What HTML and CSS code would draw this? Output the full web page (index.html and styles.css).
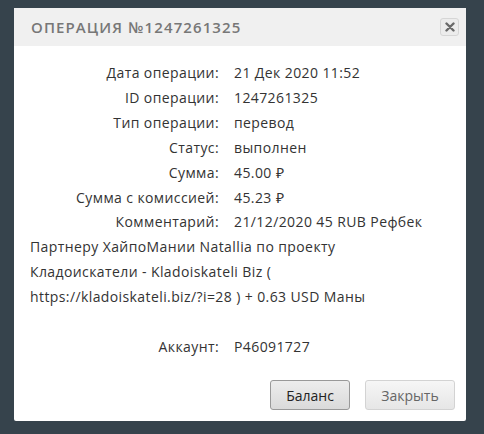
FILE: index.html
```html
<!DOCTYPE html>
<html lang="ru">
<head>
	<meta charset="UTF-8">
	<title>Операция</title>
	<link rel="stylesheet" href="styles.css">
</head>
<body>
	<div class="dialog">
		<div class="dialog-head">
			<span class="dialog-title">Операция №1247261325</span>
			<button class="close">
				<svg width="10" height="10" viewBox="0 0 10 10"><path d="M1.5 1.5 L8.5 8.5 M8.5 1.5 L1.5 8.5" stroke="#6a6a6a" stroke-width="2.4" stroke-linecap="round"/></svg>
			</button>
		</div>
		<div class="dialog-body">
			<div class="row"><span class="label">Дата операции:</span>21 Дек 2020 11:52</div>
			<div class="row"><span class="label">ID операции:</span>1247261325</div>
			<div class="row"><span class="label">Тип операции:</span>перевод</div>
			<div class="row"><span class="label">Статус:</span>выполнен</div>
			<div class="row"><span class="label">Сумма:</span>45.00 &#8381;</div>
			<div class="row"><span class="label">Сумма с комиссией:</span>45.23 &#8381;</div>
			<div class="row"><span class="label">Комментарий:</span>21/12/2020 45 RUB Рефбек Партнеру ХайпоМании Natallia по проекту Кладоискатели - Kladoiskateli Biz ( https://kladoiskateli.biz/?i=28 ) + 0.63 USD Маны</div>
			<div class="row empty"></div>
			<div class="row"><span class="label">Аккаунт:</span>P46091727</div>
		</div>
		<div class="dialog-foot">
			<button class="btn btn-main">Баланс</button>
			<button class="btn">Закрыть</button>
		</div>
	</div>
</body>
</html>
```

FILE: styles.css
```css
html, body {
	margin: 0;
	padding: 0;
	width: 484px;
	height: 434px;
	overflow: hidden;
	background: #36434c;
	font-family: "Open Sans", sans-serif;
}

.dialog {
	margin: 8px 18px 0 14px;
	height: 413px;
	background: #fff;
	border-radius: 2px;
	display: flex;
	flex-direction: column;
}

.dialog-head {
	height: 38px;
	background: #f0f0f0;
	display: flex;
	align-items: center;
	justify-content: space-between;
	padding: 0 7px 0 17px;
}

.dialog-title {
	font-size: 15px;
	font-weight: 600;
	letter-spacing: 1.1px;
	text-transform: uppercase;
	color: #777;
}

.close {
	width: 19px;
	height: 18px;
	padding: 0;
	border: 1px solid #d6d6d6;
	border-radius: 3px;
	background: #ececec;
	display: flex;
	align-items: center;
	justify-content: center;
	margin-top: -1px;
}

.dialog-body {
	padding: 15px 34px 0 16px;
	font-size: 14px;
	letter-spacing: 0.4px;
	color: #333;
	line-height: 24.9px;
	flex: 1;
}

.row.empty {
	height: 24.9px;
}

.label {
	display: inline-block;
	width: 189px;
	padding-right: 15px;
	text-align: right;
}

.dialog-foot {
	display: flex;
	justify-content: flex-end;
	gap: 15px;
	padding: 0 11px 11px 0;
}

.btn {
	width: 90px;
	height: 30px;
	font-family: "Open Sans", sans-serif;
	font-size: 14px;
	color: #666;
	border: 1px solid #d3d3d3;
	border-radius: 3px;
	background: linear-gradient(#f6f6f6, #e6e6e6);
}

.btn-main {
	width: 80px;
	color: #222;
	border-color: #999;
	background: linear-gradient(#ededed, #dadada);
}
```
